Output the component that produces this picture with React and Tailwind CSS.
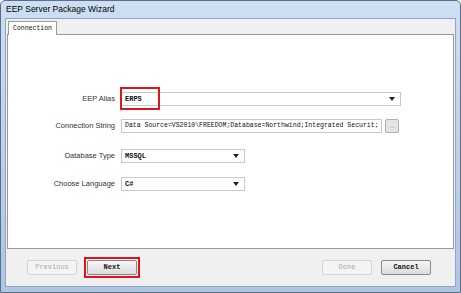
import { useState } from 'react'

const label = "w-[113px] pr-[6px] text-right text-[7.5px] text-[#333] font-['Liberation_Sans',Arial,sans-serif]"
const mono = "font-['Liberation_Mono','DejaVu_Sans_Mono',monospace]"

const Arrow = () => (
  <svg width="6" height="4" viewBox="0 0 6 4" className="shrink-0">
    <path d="M0 0 L6 0 L3 4 Z" fill="#222" />
  </svg>
)

const Combo = ({ value, width, bold }) => (
  <div
    className={`flex h-[14px] items-center justify-between border border-[#c8c8c8] bg-white pl-[3px] pr-[5px] ${width}`}
  >
    <span className={`${mono} text-[7px] text-[#111] ${bold ? 'font-bold' : ''}`}>{value}</span>
    <Arrow />
  </div>
)

const Btn = ({ children, disabled, bold }) => (
  <button
    className={`flex h-[15px] w-[50px] items-center justify-center rounded-[2px] border text-[7px] ${mono} ${
      disabled
        ? 'border-[#d4d4d4] bg-[#f4f4f4] text-[#a8a8a8]'
        : 'border-[#8a8a8a] bg-gradient-to-b from-[#f6f6f6] to-[#dcdcdc] text-[#111]'
    } ${bold ? 'font-bold' : ''}`}
  >
    {children}
  </button>
)

export default function App() {
  const [alias] = useState('ERPS')

  return (
    <div className="flex h-[293px] w-[461px] flex-col overflow-hidden rounded-t-[5px] border border-[#5a6e88] bg-gradient-to-b from-[#cddff3] via-[#bcd2eb] to-[#aec6e4]">
      {/* title bar */}
      <div className="flex h-[17px] shrink-0 items-center pl-[5px] text-[8.5px] text-black font-['Liberation_Sans',Arial,sans-serif]">
        EEP Server Package Wizard
      </div>

      <div className="mx-[4px] mb-[5px] flex flex-1 flex-col border border-[#8ea6c4] bg-[#f0f0f0]">
        {/* tab strip */}
        <div className="flex h-[15px] shrink-0 items-end pl-[2px]">
          <div className={`relative -mb-px flex h-[14px] w-[49px] items-center justify-center border border-b-0 border-[#9a9a9a] bg-white text-[6.5px] text-[#111] ${mono}`}>
            Connection
          </div>
        </div>

        {/* tab page */}
        <div className="mx-[1px] flex flex-1 flex-col border border-[#9a9a9a] bg-white pt-[57px]">
          <div className="flex items-center">
            <div className={label}>EEP Alias</div>
            <div className="relative">
              <Combo value={alias} width="w-[280px]" bold />
              <div className="pointer-events-none absolute left-[-1px] top-[-5px] h-[23px] w-[40px] border-2 border-[#e0141c]" />
            </div>
          </div>

          <div className="mt-[13px] flex items-center">
            <div className={label}>Connection String</div>
            <div className={`flex h-[14px] w-[261px] items-center overflow-hidden whitespace-nowrap border border-[#c8c8c8] bg-white pl-[3px] text-[6.5px] text-[#111] ${mono}`}>
              Data Source=VS2010\FREEDOM;Database=Northwind;Integrated Securit;
            </div>
            <button className="ml-[3px] flex h-[14px] w-[14px] items-center justify-center rounded-[2px] border border-[#b0b0b0] bg-[#e4e4e4] text-[6px] leading-none text-[#999]">
              ...
            </button>
          </div>

          <div className="mt-[16px] flex items-center">
            <div className={label}>Database Type</div>
            <Combo value="MSSQL" width="w-[124px]" bold />
          </div>

          <div className="mt-[14px] flex items-center">
            <div className={label}>Choose Language</div>
            <Combo value="C#" width="w-[124px]" bold />
          </div>
        </div>

        {/* buttons */}
        <div className="flex h-[37px] shrink-0 items-center pl-[21px] pr-[24px]">
          <Btn disabled>Previous</Btn>
          <div className="relative ml-[10px]">
            <Btn bold>Next</Btn>
            <div className="pointer-events-none absolute left-[-3px] top-[-3px] h-[21px] w-[56px] border-2 border-[#e0141c]" />
          </div>
          <div className="flex-1" />
          <Btn disabled>Done</Btn>
          <div className="ml-[9px]">
            <Btn bold>Cancel</Btn>
          </div>
        </div>
      </div>
    </div>
  )
}
